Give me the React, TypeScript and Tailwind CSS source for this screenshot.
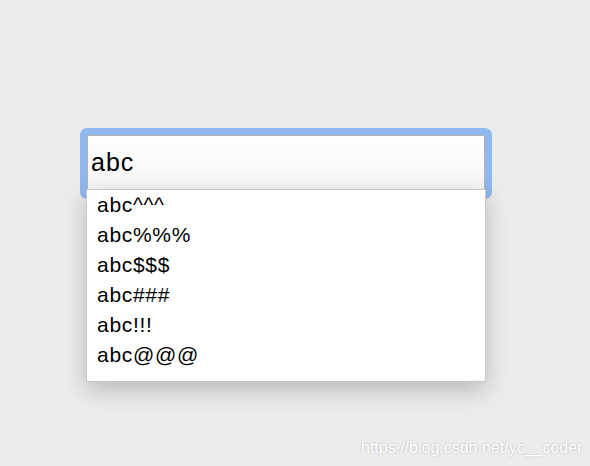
import React from "react";

const options = ["abc^^^", "abc%%%", "abc$$$", "abc###", "abc!!!", "abc@@@"];

const App = () => {
   return (
      <div className="w-[590px] h-[466px] bg-[#ececec] relative overflow-hidden font-['Liberation_Sans',Arial,sans-serif]">
         <div className="pt-[128px] pl-[80px]">
            <div className="relative w-[412px] h-[71px] rounded-[7px] bg-[#8fb8ef] p-[7px]">
               <div className="h-[57px] border border-[#b5b5b5] bg-gradient-to-b from-white to-[#f5f5f5] flex items-center pl-[3px] pb-[2px]">
                  <span className="text-[25px] tracking-[1px] text-black leading-none">abc</span>
               </div>
               {/* suggestions list */}
               <div className="absolute left-[6px] top-[61px] w-[400px] h-[193px] bg-white border border-[#c8c8c8] pl-[10px] shadow-[0_8px_22px_rgba(0,0,0,0.22)]">
                  {options.map((opt) => (
                     <div key={opt} className="text-[21px] tracking-[0.7px] leading-[30px] text-black">
                        {opt}
                     </div>
                  ))}
               </div>
            </div>
         </div>
         <div className="absolute left-[361px] top-[436px] text-[16px] text-white [text-shadow:0_0_2px_rgba(0,0,0,0.25)]">
            https://blog.csdn.net/yc__coder
         </div>
      </div>
   );
};

export default App;
